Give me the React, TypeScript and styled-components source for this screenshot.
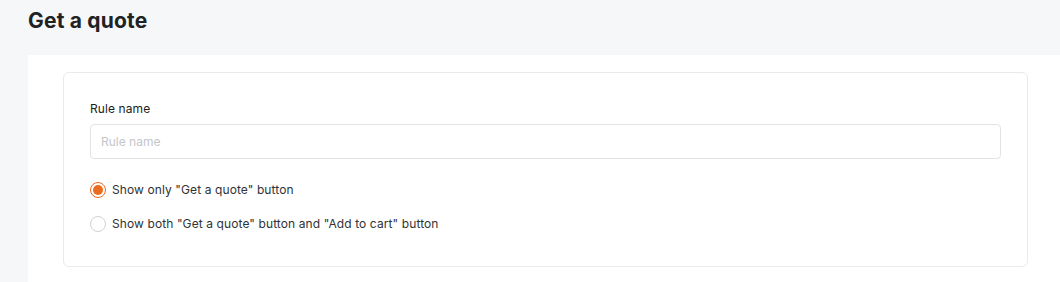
import * as React from 'react';
import styled, { createGlobalStyle } from 'styled-components';

const GlobalStyle = createGlobalStyle`
    html, body {
        margin: 0;
        padding: 0;
        background: #f6f7f9;
        font-family: Inter, "Liberation Sans", sans-serif;
        color: #202223;
    }
`;

const Page = styled.div`
    display: flex;
    flex-direction: column;
    width: 1060px;
    height: 282px;
    overflow: hidden;
`;

const Header = styled.h1`
    margin: 0;
    height: 55px;
    padding: 7px 0 0 28px;
    box-sizing: border-box;
    font-size: 21px;
    font-weight: 700;
    line-height: 27px;
    letter-spacing: 0.2px;
    color: #202223;
`;

const Panel = styled.div`
    flex-grow: 1;
    margin-left: 28px;
    padding: 17px 32px 0 35px;
    background: #ffffff;
`;

const Card = styled.section`
    display: flex;
    flex-direction: column;
    padding: 29px 26px 34px 26px;
    border: 1px solid #e8eaed;
    border-radius: 6px;
    background: #ffffff;
`;

const Label = styled.label`
    font-size: 12px;
    font-weight: 400;
    line-height: 14px;
    letter-spacing: 0.1px;
    color: #1c1e20;
    margin-bottom: 8px;
`;

const Input = styled.input`
    height: 35px;
    box-sizing: border-box;
    padding: 0 10px;
    border: 1px solid #e1e3e6;
    border-radius: 4px;
    font-family: inherit;
    font-size: 12px;
    color: #202223;
    outline: none;

    &::placeholder {
        color: #c4c6ca;
    }
`;

const Options = styled.div`
    display: flex;
    flex-direction: column;
    gap: 18px;
    margin-top: 23px;
`;

const Option = styled.label`
    display: flex;
    align-items: center;
    gap: 6px;
    font-size: 12px;
    line-height: 16px;
    letter-spacing: 0.1px;
    color: #303235;
    cursor: pointer;
`;

interface IDot {
    checked?: boolean;
}
const Dot = styled.span<IDot>`
    display: inline-flex;
    align-items: center;
    justify-content: center;
    width: 16px;
    height: 16px;
    box-sizing: border-box;
    border-radius: 50%;
    border: ${p => (p.checked ? '1.5px solid #ec6b1f' : '1.5px solid #cfd2d6')};
    background: #ffffff;

    &::after {
        content: '';
        display: ${p => (p.checked ? 'block' : 'none')};
        width: 10px;
        height: 10px;
        border-radius: 50%;
        background: #ec6b1f;
    }
`;

const options = [
    'Show only "Get a quote" button',
    'Show both "Get a quote" button and "Add to cart" button',
];

const App = () => {
    const [selected, setSelected] = React.useState(0);
    return (
        <Page>
            <GlobalStyle />
            <Header>Get a quote</Header>
            <Panel>
                <Card>
                    <Label htmlFor="rule-name">Rule name</Label>
                    <Input id="rule-name" placeholder="Rule name" />
                    <Options>
                        {options.map((text, i) => (
                            <Option key={text} onClick={() => setSelected(i)}>
                                <Dot checked={selected === i} />
                                {text}
                            </Option>
                        ))}
                    </Options>
                </Card>
            </Panel>
        </Page>
    );
};

export default App;
